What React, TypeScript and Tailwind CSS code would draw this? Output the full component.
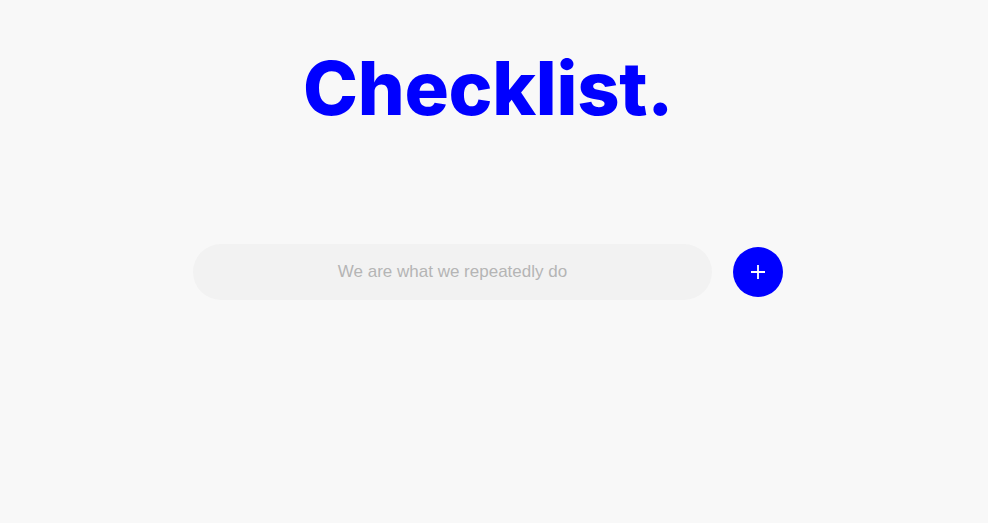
export default function App() {
  return (
    <div className="min-h-[523px] w-full bg-[#f8f8f8] pr-3 flex flex-col items-center">
      <h1 className="mt-[42px] font-['Inter',sans-serif] text-[74px] leading-[92px] font-extrabold text-[#0000ff] tracking-[-0.3px]">
        Checklist.
      </h1>
      <div className="mt-[110px] flex items-center gap-[21px]">
        <input
          type="text"
          placeholder="We are what we repeatedly do"
          className="h-[56px] w-[519px] rounded-full bg-[#f2f2f2] text-center font-['Liberation_Sans',Arial,sans-serif] text-[17px] text-gray-600 placeholder:text-[#b5b5b5] outline-none"
        />
        <button className="flex h-[50px] w-[50px] items-center justify-center rounded-full bg-[#0000ff]">
          <svg width="16" height="16" viewBox="0 0 16 16">
            <path d="M8 1v14M1 8h14" stroke="white" strokeWidth="1.8" />
          </svg>
        </button>
      </div>
    </div>
  );
}
